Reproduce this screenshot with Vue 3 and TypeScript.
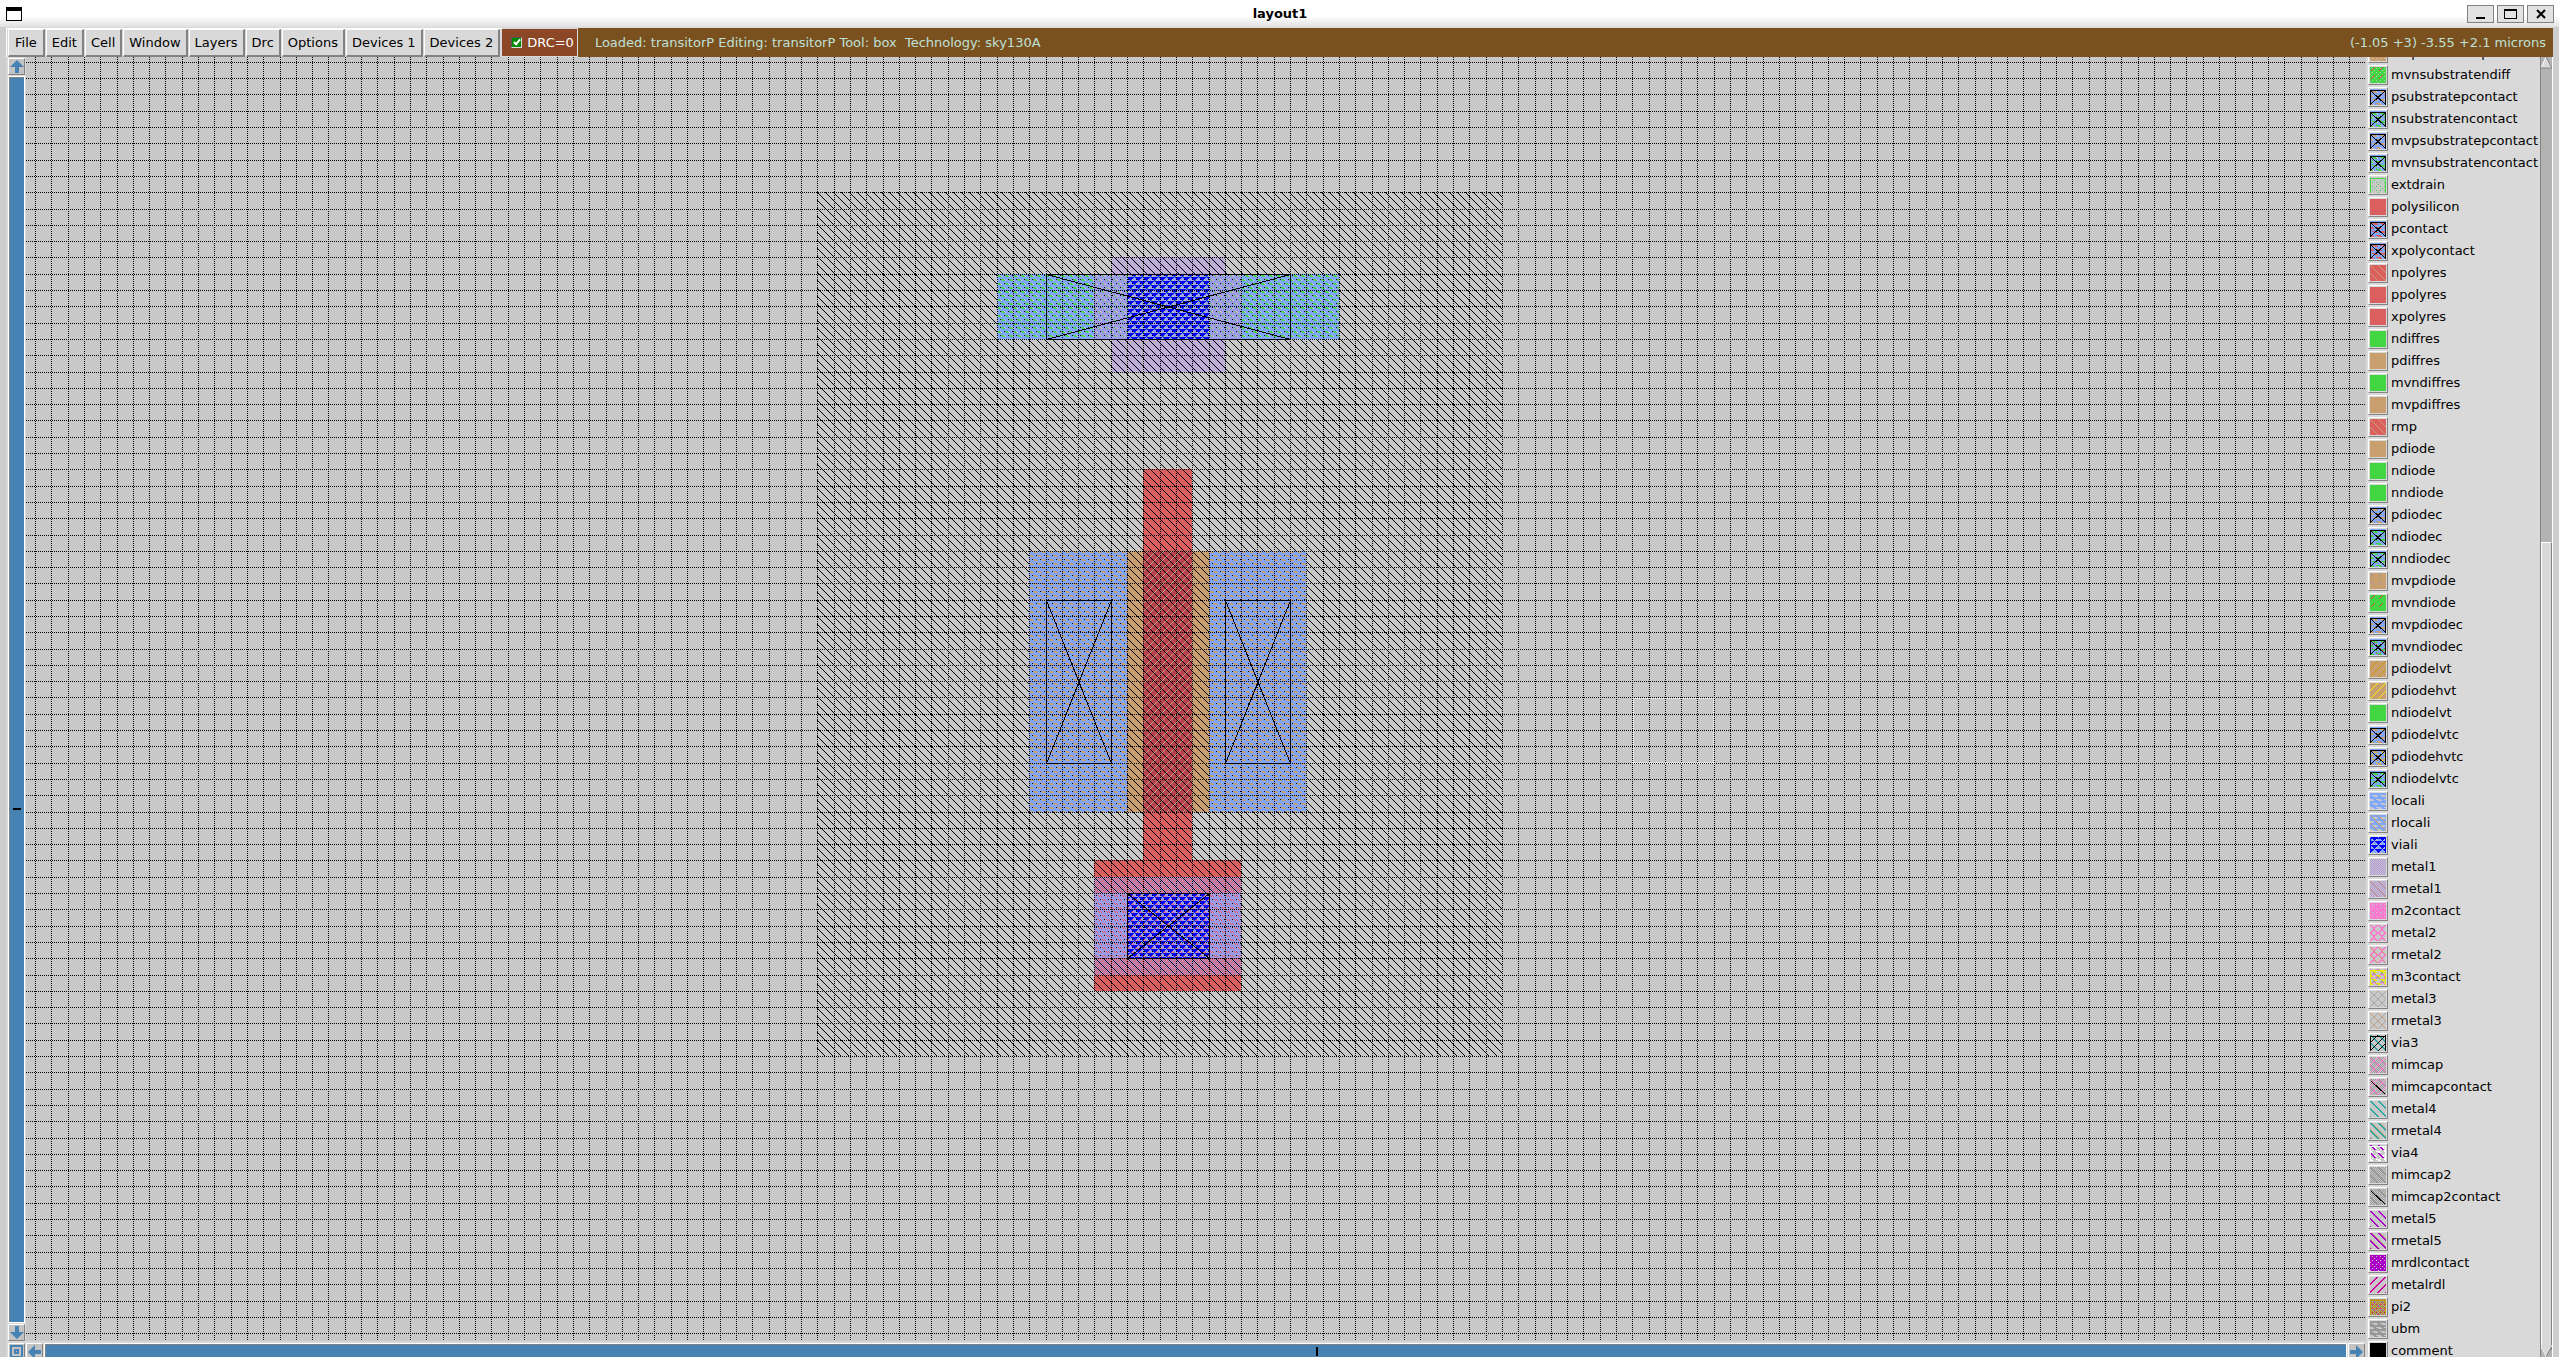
<script setup lang="ts">
type Paint = [stipple: string, color: string]
interface Layer { name: string; paints: Paint[]; mark?: 'contact' | 'slash' | 'frame'; edge?: string }
interface Shape { x1: number; y1: number; x2: number; y2: number; fill: string }

const gray = '#c8c8c8', red = '#dc5f5f', green = '#42d642', tan = '#c99f70', blue = '#7fa6fa'
const violet = '#b294dc', pink = '#ff78d0', teal = '#28a8a0', purple = '#a800c8', magenta = '#d000a0'
const dim = '#989898', gold = '#c89600', yellow = '#f0f000', crimson = '#c84848', via = '#0000ff'

// 8x8 stipple bitmaps, one byte per row, most significant bit at the left
const bitmaps: Record<string, number[]> = {
  down: [0x80, 0x40, 0x20, 0x10, 0x08, 0x04, 0x02, 0x01],
  up: [0x01, 0x02, 0x04, 0x08, 0x10, 0x20, 0x40, 0x80],
  downThick: [0xc0, 0x60, 0x30, 0x18, 0x0c, 0x06, 0x03, 0x81],
  downWide: [0xe0, 0x70, 0x38, 0x1c, 0x0e, 0x07, 0x83, 0xc1],
  upThick: [0x03, 0x06, 0x0c, 0x18, 0x30, 0x60, 0xc0, 0x81],
  downDash: [0x80, 0x40, 0x20, 0x10, 0x00, 0x00, 0x00, 0x00],
  downBlock: [0xc0, 0x60, 0x30, 0x18, 0x0c, 0x00, 0x00, 0x00],
  upDash: [0x08, 0x10, 0x20, 0x40, 0x00, 0x00, 0x00, 0x00],
  checker: [0x55, 0xaa, 0x55, 0xaa, 0x55, 0xaa, 0x55, 0xaa],
  wave: [0xff, 0xff, 0xc1, 0xf0, 0xff, 0xff, 0x1c, 0x0f],
  tri: [0x7f, 0x3e, 0x1c, 0x08, 0xf7, 0xe3, 0xc1, 0x80],
  cross: [0x81, 0x42, 0x24, 0x18, 0x18, 0x24, 0x42, 0x81],
  crossThick: [0xc3, 0x66, 0x3c, 0x18, 0x18, 0x3c, 0x66, 0xc3],
  dots: [0x00, 0x00, 0x3c, 0x0e, 0x00, 0x00, 0xc3, 0xe0],
  specks: [0x00, 0x22, 0x00, 0x08, 0x00, 0x22, 0x00, 0x80],
}

const layers: Layer[] = [
  { name: 'mvpsubstratepdiff', paints: [['solid', tan], ['specks', gray]] },
  { name: 'mvnsubstratendiff', paints: [['solid', green], ['specks', gray], ['upDash', crimson]] },
  { name: 'psubstratepcontact', paints: [['dots', tan], ['wave', blue]], mark: 'contact' },
  { name: 'nsubstratencontact', paints: [['dots', green], ['wave', blue], ['specks', green]], mark: 'contact' },
  { name: 'mvpsubstratepcontact', paints: [['dots', tan], ['wave', blue]], mark: 'contact' },
  { name: 'mvnsubstratencontact', paints: [['dots', green], ['wave', blue], ['specks', green]], mark: 'contact' },
  { name: 'extdrain', paints: [['specks', green]], mark: 'frame', edge: green },
  { name: 'polysilicon', paints: [['solid', red]] },
  { name: 'pcontact', paints: [['solid', red], ['wave', blue]], mark: 'contact' },
  { name: 'xpolycontact', paints: [['solid', red], ['wave', blue], ['specks', tan]], mark: 'contact' },
  { name: 'npolyres', paints: [['solid', red], ['down', tan]] },
  { name: 'ppolyres', paints: [['solid', red]] },
  { name: 'xpolyres', paints: [['solid', red]] },
  { name: 'ndiffres', paints: [['solid', green]] },
  { name: 'pdiffres', paints: [['solid', tan]] },
  { name: 'mvndiffres', paints: [['solid', green]] },
  { name: 'mvpdiffres', paints: [['solid', tan]] },
  { name: 'rmp', paints: [['solid', red], ['down', tan]] },
  { name: 'pdiode', paints: [['solid', tan]] },
  { name: 'ndiode', paints: [['solid', green]] },
  { name: 'nndiode', paints: [['solid', green]] },
  { name: 'pdiodec', paints: [['solid', tan], ['wave', blue]], mark: 'contact' },
  { name: 'ndiodec', paints: [['solid', green], ['wave', blue]], mark: 'contact' },
  { name: 'nndiodec', paints: [['solid', green], ['wave', blue], ['specks', gray]], mark: 'contact' },
  { name: 'mvpdiode', paints: [['solid', tan], ['downDash', dim]] },
  { name: 'mvndiode', paints: [['solid', green], ['upDash', crimson]] },
  { name: 'mvpdiodec', paints: [['solid', tan], ['wave', blue]], mark: 'contact' },
  { name: 'mvndiodec', paints: [['solid', green], ['wave', blue], ['specks', crimson]], mark: 'contact' },
  { name: 'pdiodelvt', paints: [['solid', tan], ['up', gold]] },
  { name: 'pdiodehvt', paints: [['solid', tan], ['up', yellow]] },
  { name: 'ndiodelvt', paints: [['solid', green]] },
  { name: 'pdiodelvtc', paints: [['solid', tan], ['wave', blue]], mark: 'contact' },
  { name: 'pdiodehvtc', paints: [['solid', tan], ['wave', blue], ['specks', yellow]], mark: 'contact' },
  { name: 'ndiodelvtc', paints: [['solid', green], ['wave', blue]], mark: 'contact' },
  { name: 'locali', paints: [['wave', blue]] },
  { name: 'rlocali', paints: [['wave', blue], ['down', tan]] },
  { name: 'viali', paints: [['checker', violet], ['wave', blue], ['tri', via]], mark: 'frame', edge: via },
  { name: 'metal1', paints: [['checker', violet]] },
  { name: 'rmetal1', paints: [['checker', violet], ['down', tan]] },
  { name: 'm2contact', paints: [['solid', pink], ['specks', gray], ['upDash', '#c8a0d8']] },
  { name: 'metal2', paints: [['crossThick', pink]] },
  { name: 'rmetal2', paints: [['crossThick', pink], ['down', tan]] },
  { name: 'm3contact', paints: [['crossThick', pink], ['cross', dim], ['dots', '#e8e800']], mark: 'frame', edge: '#e8e800' },
  { name: 'metal3', paints: [['cross', '#a8a8a8']] },
  { name: 'rmetal3', paints: [['cross', '#a8a8a8'], ['down', tan]] },
  { name: 'via3', paints: [['downThick', teal], ['up', '#000000']], mark: 'frame', edge: '#000000' },
  { name: 'mimcap', paints: [['checker', dim], ['cross', pink]] },
  { name: 'mimcapcontact', paints: [['checker', dim], ['cross', pink]], mark: 'slash' },
  { name: 'metal4', paints: [['downThick', teal]] },
  { name: 'rmetal4', paints: [['downWide', tan], ['downThick', teal]] },
  { name: 'via4', paints: [['dots', '#ffffff'], ['specks', '#ffffff'], ['downBlock', purple]], mark: 'frame', edge: '#ffffff' },
  { name: 'mimcap2', paints: [['checker', dim], ['down', dim]] },
  { name: 'mimcap2contact', paints: [['checker', dim], ['down', dim]], mark: 'slash' },
  { name: 'metal5', paints: [['downThick', purple]] },
  { name: 'rmetal5', paints: [['downWide', tan], ['downThick', purple]] },
  { name: 'mrdlcontact', paints: [['solid', purple], ['specks', gray], ['downDash', magenta]] },
  { name: 'metalrdl', paints: [['upThick', magenta]] },
  { name: 'pi2', paints: [['solid', gold], ['dots', dim], ['checker', dim], ['specks', magenta]], mark: 'frame', edge: gold },
  { name: 'ubm', paints: [['wave', dim]] },
  { name: 'comment', paints: [['solid', '#000000']] },
]

const patternId = (stipple: string, color: string) => `${stipple}-${color.slice(1)}`
const fillOf = ([stipple, color]: Paint) => (stipple === 'solid' ? color : `url(#${patternId(stipple, color)})`)

function bitmapPath(rows: number[]): string {
  let d = ''
  rows.forEach((row, y) => {
    for (let x = 0; x < 8; x++) if (row & (0x80 >> x)) d += `M${x} ${y}h1v1h-1z`
  })
  return d
}

const canvasPaints: Paint[] = [
  ['down', '#000000'], ['up', tan], ['dots', green], ['wave', blue], ['checker', violet], ['tri', via],
]
const patterns = new Map<string, { id: string; d: string; color: string }>()
for (const [stipple, color] of [...layers.flatMap((l) => l.paints), ...canvasPaints]) {
  const id = patternId(stipple, color)
  if (stipple !== 'solid') patterns.set(id, { id, d: bitmapPath(bitmaps[stipple]), color })
}

// Grid units to canvas pixels
const pitch = 16.298
const gx = (n: number) => Math.floor(9.6 + pitch * n)
const gy = (k: number) => Math.floor(5.37 + pitch * k)
const columns = Array.from({ length: 240 }, (_, n) => gx(n))
const rows = Array.from({ length: 140 }, (_, k) => gy(k))

const s = (x1: number, y1: number, x2: number, y2: number, ...paint: Paint): Shape =>
  ({ x1, y1, x2, y2, fill: fillOf(paint) })

const shapes: Shape[] = [
  s(59, 13, 80, 17, 'dots', green),
  s(61, 30, 78, 46, 'solid', tan),
  s(68, 25, 71, 49, 'solid', red),
  s(68, 30, 71, 46, 'solid', '#b74350'),
  s(68, 30, 71, 46, 'up', tan),
  s(65, 49, 74, 57, 'solid', red),
  s(48, 8, 90, 61, 'down', '#000000'),
  s(59, 13, 80, 17, 'wave', blue),
  s(61, 30, 67, 46, 'wave', blue),
  s(72, 30, 78, 46, 'wave', blue),
  s(65, 51, 74, 55, 'wave', blue),
  s(66, 12, 73, 13, 'checker', violet),
  s(65, 13, 74, 17, 'checker', violet),
  s(66, 17, 73, 19, 'checker', violet),
  s(65, 50, 74, 56, 'checker', violet),
  s(67, 13, 72, 17, 'tri', via),
  s(67, 51, 72, 55, 'tri', via),
]
const cuts = [
  { x1: 62, y1: 13, x2: 77, y2: 17 },
  { x1: 62, y1: 33, x2: 66, y2: 43 },
  { x1: 73, y1: 33, x2: 77, y2: 43 },
  { x1: 67, y1: 51, x2: 72, y2: 55 },
]
const cutPath = (c: { x1: number; y1: number; x2: number; y2: number }) => {
  const l = gx(c.x1) + 0.5, r = gx(c.x2) + 0.5, t = gy(c.y1) + 0.5, b = gy(c.y2) + 0.5
  return `M${l} ${t}H${r}V${b}H${l}ZL${r} ${b}M${r} ${t}L${l} ${b}`
}

// Cursor box: dotted outline, heavier along its bottom edge
const box = { l: gx(98), r: gx(103), t: gy(39), b: gy(43) }
const boxPath = `M${box.l + 1.5} ${box.b}V${box.t + 1.5}H${box.r - 0.5}V${box.b}`
  + `M${box.l} ${box.b - 0.5}H${box.r}M${box.l + 1} ${box.b + 0.5}H${box.r}`

const menus = ['File', 'Edit', 'Cell', 'Window', 'Layers', 'Drc', 'Options', 'Devices 1', 'Devices 2']
</script>

<template>
  <div class="window">
    <header class="titlebar">
      <button class="sysmenu" aria-label="Window menu"></button>
      <h1>layout1</h1>
      <div class="controls">
        <button aria-label="Minimize"><svg width="12" height="12"><path d="M1 9h9v2H1z" /></svg></button>
        <button aria-label="Maximize"><svg width="14" height="12"><path d="M0 1h13v10H0zM1 3v7h11V3z" fill-rule="evenodd" /></svg></button>
        <button aria-label="Close"><svg width="12" height="12"><path d="M2 2l8 8M10 2l-8 8" stroke="#000" stroke-width="2" /></svg></button>
      </div>
    </header>
    <div class="frame">
      <div class="toolbar">
        <nav class="menus">
          <button v-for="m in menus" :key="m">{{ m }}</button>
        </nav>
        <label class="drc"><input type="checkbox" checked />DRC=0</label>
        <div class="status">
          <span class="message">Loaded: transitorP Editing: transitorP Tool: box&nbsp; Technology: sky130A</span>
          <span>(-1.05 +3) -3.55 +2.1 microns</span>
        </div>
      </div>
      <div class="workspace">
        <div class="vscroll">
          <button class="arrow" aria-label="Scroll up"><svg width="14" height="14"><path d="M7 0l7 7H9v6H5V7H0z" /></svg></button>
          <div class="trough"><i class="tick"></i></div>
          <button class="arrow" aria-label="Scroll down"><svg width="14" height="14"><path d="M7 13l7-7H9V0H5v6H0z" /></svg></button>
        </div>
        <svg class="canvas" shape-rendering="crispEdges">
          <defs>
            <pattern v-for="p in patterns.values()" :id="p.id" :key="p.id" width="8" height="8" patternUnits="userSpaceOnUse">
              <path :d="p.d" :fill="p.color" />
            </pattern>
          </defs>
          <rect
            v-for="(r, i) in shapes" :key="i" :x="gx(r.x1)" :y="gy(r.y1)"
            :width="gx(r.x2) - gx(r.x1)" :height="gy(r.y2) - gy(r.y1)" :fill="r.fill"
          />
          <g stroke="#000" stroke-dasharray="1 1">
            <line v-for="x in columns" :key="'c' + x" :x1="x + 0.5" :x2="x + 0.5" y1="0" y2="100%" />
            <line v-for="y in rows" :key="'r' + y" x1="0" x2="100%" :y1="y + 0.5" :y2="y + 0.5" />
          </g>
          <path v-for="(c, i) in cuts" :key="'x' + i" :d="cutPath(c)" fill="none" stroke="#000" />
          <path :d="boxPath" fill="none" stroke="#fff" stroke-dasharray="1 1" />
        </svg>
        <div class="hscroll">
          <button class="arrow" aria-label="Zoom to fit"><svg width="14" height="14"><path d="M0 0h13v13H0zM2 2v9h9V2zM4 4h5v5H4zM6 6v1h1V6z" fill-rule="evenodd" /></svg></button>
          <button class="arrow" aria-label="Scroll left"><svg width="14" height="14"><path d="M0 7l7-7v5h6v4H7v5z" /></svg></button>
          <div class="trough"><i class="tick"></i></div>
          <button class="arrow" aria-label="Scroll right"><svg width="14" height="14"><path d="M13 7L6 0v5H0v4h6v5z" /></svg></button>
        </div>
        <aside class="palette">
          <ul>
            <li v-for="l in layers" :key="l.name">
              <button :aria-labelledby="'layer-' + l.name">
                <svg width="16" height="16" shape-rendering="crispEdges">
                  <rect width="16" height="16" :fill="gray" />
                  <rect v-for="(p, i) in l.paints" :key="i" width="16" height="16" :fill="fillOf(p)" />
                  <path v-if="l.mark === 'contact'" d="M.5 16V1.5H15.5V16M1 2L15 15M15 2L1 15" fill="none" stroke="#000" />
                  <path v-if="l.mark === 'slash'" d="M1 2L15 15" stroke="#000" />
                  <path v-if="l.mark === 'frame'" d="M.5 16V1.5H15.5V16" fill="none" :stroke="l.edge" />
                </svg>
              </button>
              <span :id="'layer-' + l.name">{{ l.name }}</span>
            </li>
          </ul>
          <div class="listbar">
            <svg width="11" height="12"><path d="M5 0L11 11H0z" fill="#d9d9d9" /><path d="M5 0L0 11" stroke="#fff" /><path d="M5 0L11 11H0" fill="none" stroke="#828282" /></svg>
            <div class="thumb"></div>
            <svg width="11" height="12"><path d="M0 1H11L5 12z" fill="#d9d9d9" stroke="#828282" /><path d="M0 1H11M0 1L5 12" stroke="#fff" /></svg>
          </div>
        </aside>
      </div>
    </div>
  </div>
</template>

<style>
body {
  overflow: hidden;
}
</style>

<style scoped>
.window {
  display: flex;
  flex-direction: column;
  height: 100vh;
  background: #cdcdcd;
  color: #000;
  font: 13px/16px "DejaVu Sans", sans-serif;
}
button {
  display: flex;
  align-items: center;
  justify-content: center;
  margin: 0;
  padding: 0;
  color: inherit;
  font: inherit;
}
.titlebar {
  display: grid;
  grid-template-columns: 1fr auto 1fr;
  align-items: center;
  flex: none;
  height: 27px;
  padding: 0 5px 0 6px;
  box-sizing: border-box;
  background: linear-gradient(#fff 60%, #e0e0e0);
}
.titlebar h1 {
  margin: 0;
  font-size: 13px;
}
.sysmenu {
  width: 16px;
  height: 14px;
  border: 1px solid #000;
  border-top-width: 4px;
  background: #fff;
}
.controls {
  display: flex;
  justify-content: flex-end;
  gap: 3px;
}
.controls button {
  width: 27px;
  height: 18px;
  border: 1px solid #828282;
  background: #e2e2e2;
}
.frame {
  display: flex;
  flex-direction: column;
  flex: 1;
  min-height: 0;
  margin: 0 6px;
}
.toolbar {
  display: flex;
  flex: none;
  height: 30px;
  padding-top: 1px;
  box-sizing: border-box;
  background: #d9d9d9;
}
.menus {
  display: flex;
  gap: 1px;
  padding: 0 2px 0 1px;
  border-top: 1px solid #fff;
  border-left: 1px solid #fff;
}
.menus button {
  padding: 0 5px;
  border: solid;
  border-width: 1px 2px 2px 1px;
  border-color: #fff #828282 #828282 #fff;
  background: #d9d9d9;
}
.menus button:first-child {
  padding: 0 6px;
}
.drc {
  display: flex;
  align-items: center;
  gap: 5px;
  margin: 1px 1px 1px 0;
  padding: 0 3px 0 9px;
  background: #8b4726;
  color: #fff;
}
.drc input {
  appearance: none;
  width: 11px;
  height: 11px;
  margin: 0;
  border: 1px solid;
  border-color: #555 #ddd #ddd #555;
  background: #008b00;
}
.drc input:checked::before {
  content: "";
  display: block;
  width: 2px;
  height: 5px;
  margin: 0 3px;
  border: solid #fff;
  border-width: 0 2px 2px 0;
  transform: rotate(40deg);
}
.status {
  display: flex;
  align-items: center;
  justify-content: space-between;
  flex: 1;
  padding: 0 7px 0 17px;
  background: #7a501e;
  color: #bfe0d8;
}
.workspace {
  display: grid;
  grid-template: minmax(0, 1fr) 16px / 20px minmax(0, 1fr) 187px;
  flex: 1;
  min-height: 0;
}
.canvas {
  display: block;
  width: 100%;
  height: 100%;
  background: #c8c8c8;
}
.vscroll {
  display: flex;
  flex-direction: column;
  align-items: center;
  gap: 1px;
  padding: 1px 0 0 1px;
  background: #d9d9d9;
}
.arrow {
  flex: none;
  width: 17px;
  height: 17px;
  border: 1px solid;
  border-color: #fff #828282 #828282 #fff;
  background: #c3c3c3;
  fill: #4682b4;
}
.trough {
  display: flex;
  flex: 1;
  align-items: center;
  justify-content: center;
  border: 1px solid #fff;
  box-shadow: inset 1px 1px #828282;
  background: #4682b4;
}
.vscroll .trough {
  width: 15px;
}
.tick {
  background: #000;
}
.vscroll .tick {
  width: 8px;
  height: 2px;
  margin-top: 218px;
}
.hscroll {
  display: flex;
  grid-row: 2;
  grid-column: 1 / 3;
  gap: 1px;
  height: 16px;
  padding: 2px 1px 0 2px;
  box-sizing: border-box;
  overflow: hidden;
  background: #d9d9d9;
}
.hscroll .trough {
  height: 15px;
}
.hscroll .tick {
  width: 2px;
  height: 9px;
  margin-left: 242px;
}
.palette {
  display: flex;
  grid-row: 1 / 3;
  grid-column: 3;
  justify-content: space-between;
  overflow: hidden;
  background: #d9d9d9;
}
.palette ul {
  margin: -15px 0 0;
  padding: 0 0 0 2px;
  list-style: none;
}
.palette li {
  display: flex;
  align-items: center;
  gap: 3px;
  height: 22px;
}
.palette li button {
  width: 20px;
  height: 20px;
  border: 1px solid;
  border-color: #fff #828282 #828282 #fff;
  background: #d9d9d9;
}
.listbar {
  display: flex;
  flex-direction: column;
  width: 11px;
  border-left: 1px solid #828282;
  border-right: 1px solid #fff;
  background: #b3b3b3;
}
.listbar svg {
  flex: none;
}
.thumb {
  flex: 1;
  margin-top: 473px;
  margin-bottom: -5px;
  border: 1px solid;
  border-color: #fff #828282 #828282 #fff;
  background: #d9d9d9;
}
</style>
